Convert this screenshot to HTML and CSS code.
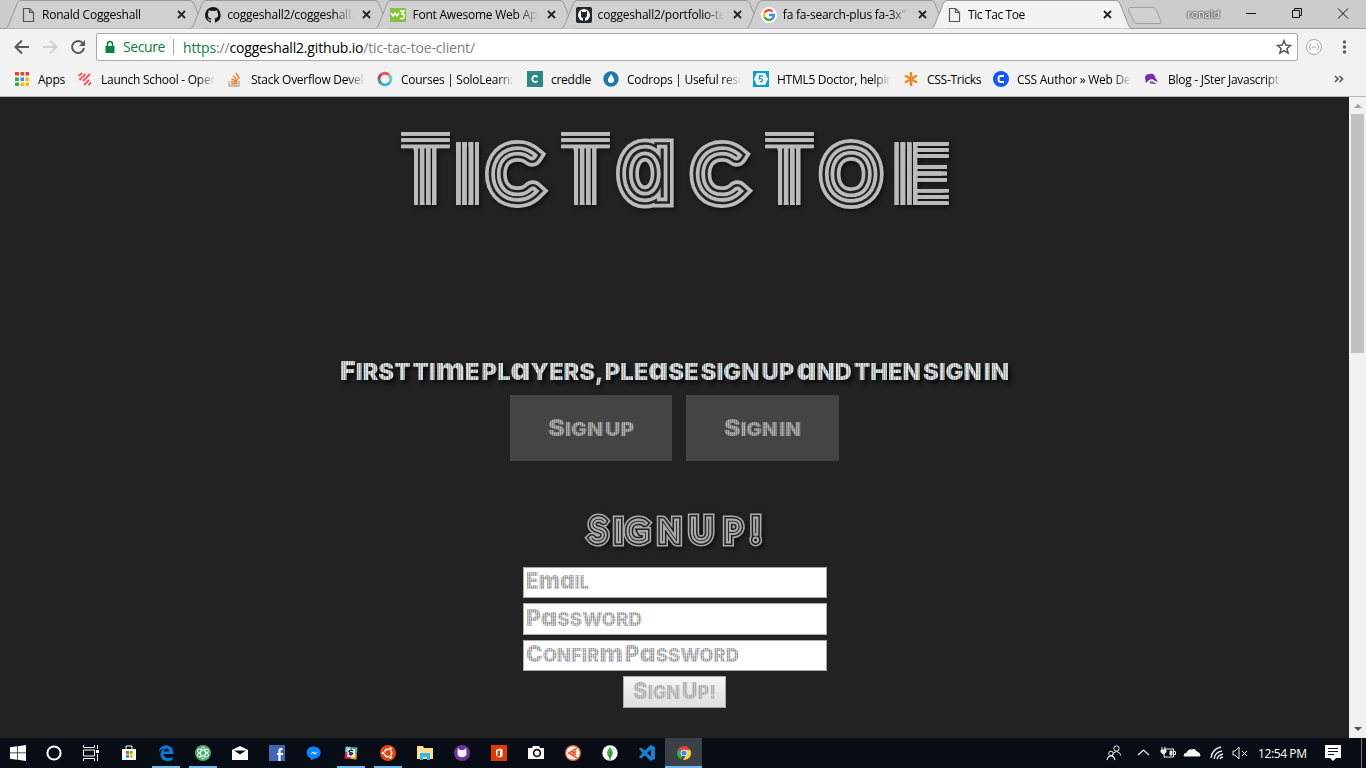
FILE: index.html
```html
<!DOCTYPE html>
<html lang="en">
<head>
<meta charset="utf-8">
<title>Tic Tac Toe</title>
<link rel="stylesheet" href="styles.css">
</head>
<body>
<svg class="sprites" width="0" height="0">
  <defs>
    <g id="doc" fill="none" stroke="#555" stroke-width="1.2"><path d="M3.5 1.5h6l4 4v9h-10zM9.500 1.500v4h4"/></g>
    <path id="x" d="M1 1l7 7M8 1L1 8" stroke="#222" stroke-width="1.8" fill="none"/>
    <path id="shape" d="M0 28.500C2 27 3 24 5 19L11 4Q12 .5 15 .5H184Q187 .5 188 4L194 19C196 24 197 27 199 28.500" stroke="#999"/>
    <path id="octo" d="M8 0a8 8 0 0 0-2.500 15.600c.4.100.5-.2.5-.4v-1.500c-2.200.5-2.700-1-2.700-1-.4-.9-.9-1.200-.9-1.200-.7-.5.1-.5.1-.5.800.1 1.200.8 1.200.8.700 1.200 1.900.9 2.300.7.100-.5.300-.9.500-1.100-1.800-.2-3.600-.9-3.600-4 0-.9.300-1.600.8-2.100-.1-.2-.4-1 .1-2.100 0 0 .7-.2 2.200.8a7.600 7.600 0 0 1 4 0c1.500-1 2.200-.8 2.200-.8.400 1.100.2 1.900.1 2.100.5.6.8 1.300.8 2.100 0 3.100-1.900 3.700-3.700 3.900.3.300.6.800.6 1.500v2.200c0 .2.100.5.6.4A8 8 0 0 0 8 0z"/>
    <pattern id="light" width="5" height="4" patternUnits="userSpaceOnUse"><rect width="5" height="4" fill="#e0e0e0"/><rect x="0" width="1" height="4" fill="#7fb4d0"/><rect x="3" width="1" height="4" fill="#b8a288"/><rect y="3" width="5" height="1" fill="#aaa" opacity=".35"/></pattern>
    <pattern id="mid" width="4" height="3" patternUnits="userSpaceOnUse"><rect width="4" height="3" fill="#b2b2b2"/><rect width="1" height="3" fill="#72899a"/><rect x="2" width="1" height="3" fill="#8f8078"/><rect y="2" width="4" height="1" fill="#777" opacity=".3"/></pattern>
    <pattern id="pale" width="4" height="3" patternUnits="userSpaceOnUse"><rect width="4" height="3" fill="#9c9c9c"/><rect width="1" height="3" fill="#bdd0e0"/><rect x="2" width="1" height="3" fill="#d3c2b8"/><rect y="2" width="4" height="1" fill="#fff" opacity=".25"/></pattern>
    <pattern id="paler" width="4" height="3" patternUnits="userSpaceOnUse"><rect width="4" height="3" fill="#adadad"/><rect width="1" height="3" fill="#c0cbd6"/><rect x="2" width="1" height="3" fill="#cfc6c2"/></pattern>
    <pattern id="col" width="6.3" height="96" patternUnits="userSpaceOnUse"><rect width="3.9" height="96" fill="#bbb"/></pattern>
    <pattern id="row" width="60" height="6.400" patternUnits="userSpaceOnUse"><rect width="60" height="3.500" fill="#bbb"/></pattern>
    <pattern id="colT" href="#col" x="18.600"/>
    <pattern id="colT2" href="#col" x="178.600"/>
    <pattern id="colT3" href="#col" x="382.600"/>
    <pattern id="colI" href="#col" x="61.200"/>
    <pattern id="colE" href="#col" x="499.500"/>
    <pattern id="rowT" href="#row" y="10"/>
    <pattern id="bars" width="800" height="200" patternUnits="userSpaceOnUse" x="-40" y="-40" viewBox="-40 -40 800 200">
      <rect x="6.500" y="10" width="48" height="16.300" fill="url(#rowT)"/><rect x="18.600" y="26" width="22.800" height="57" fill="url(#colT)"/>
      <rect x="166.500" y="10" width="48" height="16.300" fill="url(#rowT)"/><rect x="178.600" y="26" width="22.800" height="57" fill="url(#colT2)"/>
      <rect x="370.500" y="10" width="48" height="16.300" fill="url(#rowT)"/><rect x="382.600" y="26" width="22.800" height="57" fill="url(#colT3)"/>
      <rect x="61.200" y="20" width="22.800" height="63" fill="url(#colI)"/>
      <rect x="499.500" y="20" width="22.800" height="63" fill="url(#colE)"/>
      <path d="M521 21.700h32.500M521 27.900h32.500M521 34.200h32.500M521 45h31M521 51.500h31M521 57.700h31M521 68.600h32.500M521 75h32.500M521 81.300h32.500" stroke="#bbb" stroke-width="3.400"/>
    </pattern>
  </defs>
</svg>

<header class="browser">
  <div class="tabs">
    <div class="tab"><svg class="edge" width="199" height="29"><use href="#shape" fill="#d0d0d0"/></svg><svg class="ico" viewBox="0 0 16 16"><use href="#doc"/></svg><span>Ronald Coggeshall</span><svg class="close" viewBox="0 0 9 9"><use href="#x"/></svg></div>
    <div class="tab"><svg class="edge" width="199" height="29"><use href="#shape" fill="#d0d0d0"/></svg><svg class="ico" viewBox="0 0 16 16"><use href="#octo" fill="#191717"/></svg><span>coggeshall2/coggeshall2</span><svg class="close" viewBox="0 0 9 9"><use href="#x"/></svg></div>
    <div class="tab"><svg class="edge" width="199" height="29"><use href="#shape" fill="#d0d0d0"/></svg><svg class="ico" viewBox="0 0 16 16"><rect y="1" width="16" height="14" fill="#83c340"/><path d="M1 6l2 3 2-3 2 3 2-3M10 4h4l-2 3q3 0 2 3t-4 1" fill="none" stroke="#fff" stroke-width="1.400"/></svg><span>Font Awesome Web Application</span><svg class="close" viewBox="0 0 9 9"><use href="#x"/></svg></div>
    <div class="tab"><svg class="edge" width="199" height="29"><use href="#shape" fill="#d0d0d0"/></svg><svg class="ico" viewBox="0 0 16 16"><rect width="16" height="16" rx="2" fill="#24292e"/><circle cx="8" cy="8" r="6" fill="#fff"/><path d="M5 4l2 1h2l2-1v5q-1 2-2 2v3H7v-3q-2 0-2-2z" fill="#24292e"/></svg><span>coggeshall2/portfolio-template</span><svg class="close" viewBox="0 0 9 9"><use href="#x"/></svg></div>
    <div class="tab"><svg class="edge" width="199" height="29"><use href="#shape" fill="#d0d0d0"/></svg><svg class="ico" viewBox="0 0 16 16"><circle cx="8" cy="8" r="8" fill="#fff"/><g fill="none" stroke-width="2.300"><path d="M11.500 4.500A5 5 0 0 0 3.600 5.800" stroke="#ea4335"/><path d="M3.600 5.800a5 5 0 0 0 0 4.500" stroke="#fbbc05"/><path d="M3.600 10.200a5 5 0 0 0 7.700 1.500" stroke="#34a853"/><path d="M11.300 11.700A5 5 0 0 0 13 8H8" stroke="#4285f4"/></g></svg><span>fa fa-search-plus fa-3x" - Google</span><svg class="close" viewBox="0 0 9 9"><use href="#x"/></svg></div>
    <div class="tab active"><svg class="edge" width="199" height="29"><use href="#shape" fill="#f2f2f2"/></svg><svg class="ico" viewBox="0 0 16 16"><use href="#doc"/></svg><span>Tic Tac Toe</span><svg class="close" viewBox="0 0 9 9"><use href="#x"/></svg></div>
    <svg class="newtab" width="36" height="18"><path d="M3 .5h23q2 0 3 2l5 12q1 2-1 2H10q-2 0-3-2L1.500 3Q1 .5 3 .5z" fill="#d0d0d0" stroke="#a0a0a0"/></svg>
    <span class="user">ronald</span>
    <svg class="winctl" width="116" height="28" fill="none" stroke="#111"><path d="M9 13.500h10M55.500 10.500h7v7h-7zM57.500 10V8.500h7v7H63M101 8.500l10 10M111 8.500l-10 10"/></svg>
  </div>
  <div class="toolbar">
    <svg class="nav" width="96" height="36" fill="none" stroke-width="2"><path d="M29 18H16M22 11.500L15.500 18l6.500 6.500" stroke="#555a5e"/><path d="M43 18h13M50 11.500l6.500 6.500-6.500 6.500" stroke="#d0d0d0"/><path d="M83 14.500A6 6 0 1 0 84 19" stroke="#555a5e"/><path d="M85 11v6h-6z" fill="#555a5e"/></svg>
    <div class="omni">
      <svg width="10" height="13" viewBox="0 0 10 13"><path d="M.5 5h9v7h-9z" fill="#0b8043"/><path d="M2.500 6V3a2.500 2.500 0 0 1 5 0v3" fill="none" stroke="#0b8043" stroke-width="1.500"/></svg>
      <span class="secure">Secure</span>
      <span class="url"><b>https</b>://<i>coggeshall2.github.io</i>/tic-tac-toe-client/</span>
      <svg class="star" width="16" height="16" viewBox="0 0 16 16"><path d="M8 1.800l1.800 4.300 4.700.4-3.600 3 1.200 4.600L8 11.600l-4.100 2.500 1.200-4.600-3.600-3 4.700-.4z" fill="none" stroke="#555" stroke-width="1.500"/></svg>
    </div>
    <svg class="ext" width="68" height="36"><circle cx="16" cy="18" r="7.500" fill="#fafafa" stroke="#aaa"/><path d="M13 15q-1.500 0-1 2l-1 1 1 1q-.5 2 1 2M19 15q1.500 0 1 2l1 1-1 1q.5 2-1 2M14 18h4" fill="none" stroke="#aaa"/><g fill="#5a5a5a"><circle cx="46.500" cy="13" r="1.700"/><circle cx="46.500" cy="18" r="1.700"/><circle cx="46.500" cy="23" r="1.700"/></g></svg>
  </div>
  <nav class="marks">
    <a class="w63"><svg viewBox="0 0 16 16"><path d="M1 1h4v3.500H1z" fill="#ea4335"/><path d="M6.500 1H10v3.500H6.500zM11.500 1H15v3.500h-3.500z" fill="#ea4335"/><path d="M1 6.500h4V10H1zM1 11.500h4V15H1z" fill="#34a853"/><path d="M6.500 6.500H10V10H6.500z" fill="#4285f4"/><path d="M11.500 6.500H15V10h-3.500zM6.500 11.500H10V15H6.500zM11.500 11.500H15V15h-3.500z" fill="#fbbc05"/></svg><span>Apps</span></a>
    <a><svg viewBox="0 0 16 16"><path d="M1.500 5l3.500-3M2.500 9l6-6M6 10l7-7M7 14l5-5M11.500 14l2.500-2.500" stroke="#ee5a5e" stroke-width="2" fill="none"/></svg><span>Launch School - Open</span></a>
    <a class="w149"><svg viewBox="0 0 16 16" fill="none"><path d="M2 10v5h10v-5" stroke="#aaa" stroke-width="1.300"/><path d="M4 12.800h6.500M4 10.500l6.500.7M4.500 8l6 2M6 5l5 3.700M9 2l3.500 5.500" stroke="#f48024" stroke-width="1.400"/></svg><span>Stack Overflow Developer</span></a>
    <a><svg viewBox="0 0 16 16" fill="none" stroke-width="3"><path d="M2 8a6 6 0 0 1 3-5" stroke="#b64a6b"/><path d="M5 3a6 6 0 0 1 7 1" stroke="#ee5555"/><path d="M12 4a6 6 0 0 1 1 7" stroke="#6fcbb3"/><path d="M13 11a6 6 0 0 1-8 2" stroke="#38b6dc"/><path d="M5 13a6 6 0 0 1-3-5" stroke="#559b81"/></svg><span>Courses | SoloLearn: Learn</span></a>
    <a class="w76"><svg viewBox="0 0 16 16"><path d="M0 0h16v16H0z" fill="#2f8886"/><path d="M10.500 6a3 3 0 1 0 0 4" fill="none" stroke="#fff" stroke-width="1.800"/></svg><span>creddle</span></a>
    <a><svg viewBox="0 0 16 16"><circle cx="8" cy="8" r="7.700" fill="#2278a8"/><path d="M8 3q3 4 3 6a3 3 0 0 1-6 0q0-2 3-6z" fill="#fff"/></svg><span>Codrops | Useful resources</span></a>
    <a><svg viewBox="0 0 16 16"><path d="M0 0h16v16H0z" fill="#0a9cdc"/><path d="M4 2h8l3 6-3 6H4L1 8z" fill="#fff"/><path d="M10 5H6.500v3q3-1 3 1t-3 1.500" fill="none" stroke="#0a9cdc" stroke-width="1.300"/></svg><span>HTML5 Doctor, helping</span></a>
    <a class="w90"><svg viewBox="0 0 16 16"><path d="M8 1v14M2 4.500l12 7M14 4.500l-12 7" stroke="#e58a26" stroke-width="2.600"/></svg><span>CSS-Tricks</span></a>
    <a class="w151"><svg viewBox="0 0 16 16"><circle cx="8" cy="8" r="8" fill="#1455fa"/><path d="M11 5H7.500q-2 0-2 3t2 3H11" fill="none" stroke="#fff" stroke-width="2"/></svg><span>CSS Author » Web Design</span></a>
    <a class="last"><svg viewBox="0 0 16 16"><path d="M1 7q0-4 5-4 4-1 5 3l3 5-3-1-3-2-3 1-3 3z" fill="#7b2ab1"/><path d="M8 10l5 3H7l-2-2z" fill="#777"/></svg><span>Blog - JSter Javascript</span></a>
    <svg class="more" viewBox="0 0 16 16"><path d="M4 5l3 3-3 3M8.500 5l3 3-3 3" fill="none" stroke="#555" stroke-width="1.600"/></svg>
  </nav>
</header>

<div class="viewport">
  <main>
    <h1>
      <svg class="logo" width="560" height="96">
        <defs><text id="ttt" y="83"><tspan class="t" x="-3" y="83">T</tspan><tspan class="i" x="59.500" y="83">i</tspan><tspan class="c" x="96" y="75">c</tspan> <tspan class="t" x="157" y="83">T</tspan><tspan class="a" x="226" y="75">a</tspan><tspan class="c" x="300.500" y="75">c</tspan> <tspan class="t" x="361" y="83">T</tspan><tspan class="o" x="429.500" y="75.500">o</tspan><tspan class="e" x="500" y="83">e</tspan></text></defs>
        <use href="#ttt" stroke="#bbb" stroke-width="21"/><use href="#ttt" stroke="#222" stroke-width="13.700"/><use href="#ttt" stroke="#bbb" stroke-width="8.500"/><use href="#ttt" fill="#222" stroke="#222" stroke-width="1"/>
      </svg>
    </h1>
    <h3><svg class="deco" width="680" height="36"><text x="5" y="26" textLength="669" lengthAdjust="spacingAndGlyphs" fill="url(#light)"><tspan class="cap">F</tspan>irst ti<tspan class="rd">m</tspan>e pl<tspan class="rd">a</tspan>yers, ple<tspan class="rd">a</tspan>se sign up <tspan class="rd">a</tspan>nd then sign in</text></svg></h3>
    <div class="actions">
      <button class="up"><svg class="deco small" width="88" height="30"><text x="1" y="22" textLength="86" lengthAdjust="spacingAndGlyphs" fill="url(#mid)"><tspan class="cap">S</tspan>ign up</text></svg></button>
      <button class="in"><svg class="deco small" width="80" height="30"><text x="1" y="22" textLength="77" lengthAdjust="spacingAndGlyphs" fill="url(#mid)"><tspan class="cap">S</tspan>ign in</text></svg></button>
    </div>
    <h2>
      <svg class="sub" width="190" height="48">
        <defs><text id="su" y="33.500"><tspan class="s" x="10">S</tspan><tspan class="n" x="35">i</tspan><tspan class="n" x="47">g</tspan><tspan class="n" x="79">n</tspan> <tspan class="s" x="110">U</tspan><tspan class="n" x="145">p</tspan><tspan class="s" x="172">!</tspan></text></defs>
        <use href="#su" stroke="#aaa" stroke-width="11"/><use href="#su" stroke="#222" stroke-width="7.800"/><use href="#su" stroke="#aaa" stroke-width="4.800"/><use href="#su" fill="#222" stroke="#222" stroke-width=".5"/>
      </svg>
    </h2>
    <form>
      <div class="field"><svg class="deco small" width="290" height="27"><text x="2" y="20.500" textLength="63" lengthAdjust="spacingAndGlyphs" fill="url(#pale)"><tspan class="cap">E</tspan><tspan class="rd">ma</tspan>il</text></svg></div>
      <div class="field tall"><svg class="deco small" width="290" height="27"><text x="2" y="21.500" textLength="116" lengthAdjust="spacingAndGlyphs" fill="url(#pale)"><tspan class="cap">P</tspan><tspan class="rd">a</tspan>ssword</text></svg></div>
      <div class="field"><svg class="deco small" width="290" height="27"><text x="2" y="20.500" textLength="213" lengthAdjust="spacingAndGlyphs" fill="url(#pale)"><tspan class="cap">C</tspan>onfir<tspan class="rd">m</tspan> <tspan class="cap">P</tspan><tspan class="rd">a</tspan>ssword</text></svg></div>
      <button class="submit" type="button"><svg class="deco small" width="86" height="28"><text x="1" y="21" textLength="83" lengthAdjust="spacingAndGlyphs" fill="url(#paler)"><tspan class="cap">S</tspan>ign <tspan class="cap">U</tspan>p!</text></svg></button>
    </form>
  </main>
  <div class="scroll"><i class="arrow top"></i><i class="thumb"></i><i class="arrow"></i></div>
</div>

<footer class="taskbar">
  <div class="slots">
    <a><svg viewBox="0 0 16 16"><path d="M0 2.300l7-1v6.300H0zM7.700 1.200L16 0v7.600H7.700zM0 8.300h7v6.400l-7-1zM7.700 8.300H16V16l-8.300-1.200z" fill="#fff"/></svg></a>
    <a><svg viewBox="0 0 16 16"><circle cx="8" cy="8" r="6.600" fill="none" stroke="#fff" stroke-width="2"/></svg></a>
    <a><svg viewBox="0 0 16 16"><path d="M.5 0v2.500h11V0M.5 5h11v6H.5zM.5 16v-2.500h11V16M14.500 0v4M14.500 9v7" fill="none" stroke="#fff"/><path d="M13 5h3v3h-3z" fill="#fff"/></svg></a>
    <a><svg viewBox="0 0 16 16"><path d="M1 4h14v11H1z" fill="#fff"/><path d="M5 4V1h6v3" fill="none" stroke="#fff"/><path d="M5 6h3v3H5z" fill="#f25022"/><path d="M8.700 6h3v3h-3z" fill="#7fba00"/><path d="M5 9.700h3v3H5z" fill="#00a4ef"/><path d="M8.700 9.700h3v3h-3z" fill="#ffb900"/></svg></a>
    <a class="on"><svg viewBox="0 0 16 16"><path d="M.5 7Q2 .2 8.500.2 15.500.5 15.500 9H5.500q.5 4 4.500 4 2.500 0 4.500-1.200V15q-2 1-5.500 1-6.500-.5-6.500-6.500 0-4 3.500-6Q2.500 4 .5 7zM5.600 6.500h5.400q-.2-3-2.700-3-2.300.200-2.700 3z" fill="#0a78d6"/></svg></a>
    <a class="on"><svg viewBox="0 0 16 16"><circle cx="8" cy="8" r="8" fill="#4cab70"/><g fill="none" stroke="#e8f6eb"><ellipse cx="8" cy="8" rx="2.500" ry="6"/><ellipse cx="8" cy="8" rx="2.500" ry="6" transform="rotate(60 8 8)"/><ellipse cx="8" cy="8" rx="2.500" ry="6" transform="rotate(120 8 8)"/></g></svg></a>
    <a><svg viewBox="0 0 16 16"><path d="M0 5l8-4 8 4v10H0z" fill="#fff"/><path d="M2 5.500h12L8 9.500z" fill="#0a0e15"/></svg></a>
    <a><svg viewBox="0 0 16 16"><path d="M0 0h16v16H0z" fill="#4267b2"/><path d="M13.500 4h-1.500q-1.500 0-1.500 2v10M8 9h6" fill="none" stroke="#fff" stroke-width="2.200"/></svg></a>
    <a><svg viewBox="0 0 16 16"><path d="M8 1.500a6.500 6 0 0 1 0 12.300l-3 1.700v-2A6.500 6.200 0 0 1 8 1.500z" fill="#0a84ff"/><path d="M4 9.500l3-3 2 1.600 3-1.600-3 3-2-1.600z" fill="#fff"/></svg></a>
    <a class="on"><svg viewBox="0 0 16 16"><g transform="rotate(5 8 8)"><path d="M2 2h6v6H2z" fill="#70cadb"/><path d="M8 2h6v6H8z" fill="#3eb991"/><path d="M2 8h6v6H2z" fill="#d82062"/><path d="M8 8h6v6H8z" fill="#e9a820"/><path d="M4.500 4h7.500v8H4.500z" fill="#fff"/></g><path d="M10 6q-3-2-4 .5 1 1.500 3.500 1.800-.5 2.500-3.500.7" fill="none" stroke="#222" stroke-width="1.500"/></svg></a>
    <a class="on"><svg viewBox="0 0 16 16"><circle cx="8" cy="8" r="8" fill="#dd4814"/><circle cx="8" cy="8" r="3.700" fill="none" stroke="#fff" stroke-width="1.600"/><g fill="#fff" stroke="#dd4814" stroke-width=".7"><circle cx="3" cy="8" r="1.700"/><circle cx="10.500" cy="3.700" r="1.700"/><circle cx="10.500" cy="12.300" r="1.700"/></g></svg></a>
    <a><svg viewBox="0 0 16 16"><path d="M0 1h6l1 2h9v11H0z" fill="#ffe08a"/><path d="M3 15V8h10v7h-3v-3H6v3z" fill="#36b7ea"/></svg></a>
    <a><svg viewBox="0 0 16 16"><circle cx="8" cy="8" r="8" fill="#6a3498"/><path d="M4 3l2 2h4l2-2q1.500 7-1 8.500-3 1.500-6 0Q2.500 10 4 3z" fill="#f4eef7"/></svg></a>
    <a><svg viewBox="0 0 16 16"><path d="M0 0h16v16H0z" fill="#dc3b0a"/><path d="M5 11V5l4-1.500 2.500 1v7L9 12.500zl4 .3V5L6.500 6v4z" fill="#fff" fill-rule="evenodd"/></svg></a>
    <a><svg viewBox="0 0 16 16"><path d="M0 3h4l1-2h6l1 2h4v11H0z" fill="#fff"/><circle cx="9" cy="8" r="3.400" fill="#fff" stroke="#111" stroke-width="1.700"/></svg></a>
    <a><svg viewBox="0 0 16 16"><circle cx="8" cy="8" r="7.300" fill="#fff" stroke="#ed6b3c" stroke-width="1.400"/><path d="M12 3L4 8l8 5M7 6l4 4M7 10l4-4" fill="none" stroke="#e85c2b" stroke-width="1.800"/></svg></a>
    <a><svg viewBox="0 0 16 16"><circle cx="8" cy="8" r="7.700" fill="#fff"/><path d="M8 2q6 6 0 11.500Q2 8 8 2z" fill="#4caf50"/><path d="M8 6v9" stroke="#247b35"/></svg></a>
    <a><svg viewBox="0 0 16 16"><path d="M11.500 0L16 2v12l-4.500 2L6 10.500 2 13.500 0 12l3.500-4L0 4l2-1.500 4 3zm.5 4.500L8 8l4 3.500z" fill="#1580d4"/></svg></a>
    <a class="on current"><svg viewBox="0 0 16 16"><path d="M8 8L2 4.600A7 7 0 0 1 14.300 5H8z" fill="#ea4335"/><path d="M8 8l-2.800 6.400A7 7 0 0 1 2 4.500z" fill="#34a853"/><path d="M8 5h6.300A7 7 0 0 1 7 15l3.500-6z" fill="#fdd13a"/><circle cx="8" cy="8" r="3.300" fill="#fff"/><circle cx="8" cy="8" r="2.600" fill="#4285f4"/></svg></a>
  </div>
  <div class="tray">
    <svg width="152" height="30" fill="none" stroke="#eee"><circle cx="12.500" cy="10.500" r="2.700"/><path d="M8 18q1-4 4.500-4.500 3.500.5 4.500 4"/><circle cx="7" cy="15.500" r="2.300"/><path d="M3 22q1-4 4-4t4 4M34 17l5.500-5 5.500 5" stroke-width="1.200"/><path d="M60 11h9.500v8H60v-4M69.500 13.500h2v3h-2"/><path d="M66 13h2v4h-2zM57 12h5v2q-2.500 4-5 0zM58 9v3M61 9v3" fill="#eee"/><path d="M80 18q0-3 3-3 1-4 5-3 3-2 5 2 3 .5 3 4z" fill="#fff"/><path d="M107 20q1-9 10-11M110 21q1-7 8-8M113 21q1-4 6-5M116 21q1-2 3-2" stroke-width="1.300"/><path d="M129 13h2l4-4v12l-4-4h-2zM138 13l5 5M143 13l-5 5"/></svg>
    <span class="clock">12:54 PM</span>
    <svg class="note" width="18" height="16"><path d="M0 0h16v13h-5l-3 3-3-3H0z" fill="#fff"/><path d="M3 3.500h10M3 6.500h10M3 9.500h6" stroke="#10151d"/></svg>
    <i class="desk"></i>
  </div>
</footer>
</body>
</html>
```
FILE: styles.css
```css
* { box-sizing: border-box; }
body { margin: 0; width: 1366px; height: 768px; overflow: hidden; display: flex; flex-direction: column; font: 12px "Open Sans", "Noto Sans", sans-serif; color: #000; }
svg { display: block; flex: none; overflow: visible; }
.sprites { position: absolute; }
.browser { height: 97px; background: #f2f2f2; border-bottom: 1px solid #b5b5b5; }
.tabs { height: 29px; background: #ccc; border-bottom: 1px solid #999; display: flex; padding-left: 6px; }
.tab { position: relative; width: 199px; height: 29px; margin-right: -13.8px; flex: none; display: flex; align-items: center; padding-left: 14px; }
.tab.active { z-index: 2; margin-right: -4px; }
.edge { position: absolute; left: 0; top: 0; }
.tab .ico, .tab span, .tab .close { position: relative; }
.ico { width: 16px; height: 16px; margin-right: 6px; }
.tab span { width: 126px; margin-right: 9px; letter-spacing: -.22px; }
.tab.active span { letter-spacing: -.4px; }
.tab span, .marks span { white-space: nowrap; overflow: hidden; -webkit-mask-image: linear-gradient(90deg, #000 85%, transparent); mask-image: linear-gradient(90deg, #000 85%, transparent); }
.close { width: 9px; height: 9px; }
.newtab { margin-top: 7px; }
.user { margin: 6px 0 0 24px; width: 34px; font-size: 11px; line-height: 15px; letter-spacing: -.1px; color: #fff; text-shadow: 0 0 1px #333, 0 0 2px #333, 0 0 2px #444; }
.winctl { margin-left: 16px; }
.toolbar { height: 36px; display: flex; align-items: center; }
.omni { width: 1202px; height: 28px; background: #fff; border: 1px solid #a8a8a8; border-radius: 2px; display: flex; align-items: center; padding: 0 5px 0 8px; font-size: 14px; color: #808080; }
.secure { color: #0b8043; margin-left: 8px; padding-right: 9px; border-right: 1px solid #aaa; line-height: 16px; letter-spacing: -.4px; width: 51px; }
.url { margin-left: 9px; letter-spacing: -.17px; }
.url b { font-weight: 400; color: #0b8043; }
.url i { font-style: normal; color: #000; }
.star { margin-left: auto; }
.marks { display: flex; align-items: center; height: 28px; padding-left: 14px; }
.marks a { display: flex; align-items: center; gap: 8px; width: 150px; flex: none; }
.marks a svg, .more { width: 16px; height: 16px; }
.marks span { width: 114px; letter-spacing: -.27px; }
.marks .w63 { width: 63px; } .marks .w76 { width: 76px; } .marks .w90 { width: 90px; } .marks .w149 { width: 150px; } .marks .w151 { width: 151px; }
.w63 span, .w76 span, .w90 span { width: auto; -webkit-mask-image: none; mask-image: none; overflow: visible; }
.more { margin-left: 37px; }
.viewport { height: 641px; display: flex; background: #222; }
main { width: 1349px; padding-top: 25px; display: flex; flex-direction: column; align-items: center; }
h1, h2, h3 { margin: 0; }
text { text-transform: uppercase; }
.logo, .sub { filter: drop-shadow(2px 2px 2px #111); }
h3 svg { filter: drop-shadow(3px 3px 2px #0a0a0a); }
.logo text, .sub text { font-family: Lato, sans-serif; font-weight: 100; stroke-linejoin: miter; stroke-miterlimit: 2; }
.t, .i, .e { font-family: Inter, sans-serif; font-weight: 900; fill: url(#bars); stroke: url(#bars); stroke-width: 3px; }
.t { font-size: 100px; stroke-width: 5px; } .i, .e { font-size: 85px; }
.i { stroke-width: 7px; } .e { stroke-width: 13px; }
.c { font-size: 66px; } .o { font-size: 68px; }
.a, .rd { text-transform: none; font-feature-settings: "cv11"; }
.a { font-family: Inter, sans-serif; font-size: 87px; }
h3 { margin-top: 136px; }
.deco text { font: 900 23px Inter, "Open Sans", sans-serif; word-spacing: -2.5px; }
.deco .cap { font-size: 26px; }
.deco .rd { font-size: 30px; }
.deco.small text { font-size: 19px; word-spacing: -2px; }
.deco.small .cap { font-size: 23px; }
.deco.small .rd { font-size: 26px; }
.actions { display: flex; gap: 14px; margin-top: 5px; }
.actions button { height: 66px; border: 0; background: #444; padding: 2px 0 0; display: flex; align-items: center; justify-content: center; }
.up { width: 162px; } .in { width: 153px; }
h2 { margin-top: 46px; }
.s { font-size: 31px; } .n { font-size: 28px; }
form { margin-top: 12px; width: 304px; display: flex; flex-direction: column; align-items: center; gap: 5px; }
.field { width: 304px; height: 31px; background: #fff; border: 1px solid #aaa; }
.field.tall { height: 32px; }
.submit { width: 103px; height: 32px; padding: 0 0 0 8px; border: 1px solid #aaa; background: linear-gradient(#f6f6f6, #dedede); }
.scroll { width: 17px; background: #f1f1f1; display: flex; flex-direction: column; align-items: center; padding: 7px 0; }
.arrow { border: 4px solid transparent; border-top: 4px solid #505050; border-bottom: 0; margin-top: auto; }
.arrow.top { border-top: 0; border-bottom: 4px solid #a3a3a3; margin: 0; }
.thumb { width: 13px; height: 239px; margin-top: 6px; background: #c1c1c1; }
.taskbar { height: 30px; background: #080c14; display: flex; justify-content: space-between; color: #fff; }
.slots { display: flex; }
.slots a { width: 37px; height: 30px; display: flex; align-items: center; justify-content: center; position: relative; }
.slots a:nth-child(-n+2) { width: 36px; }
.slots a:nth-child(4) { margin-left: 1px; }
.slots svg { width: 16px; height: 16px; }
.on::after { content: ""; position: absolute; left: 5px; right: 4px; bottom: 0; height: 2px; background: #76b9ed; }
.current { background: #3b4047; }
.current::after { left: 0; right: 0; }
.tray { display: flex; align-items: center; width: 262px; }
.clock { width: 50px; margin-left: 2px; letter-spacing: -.4px; white-space: nowrap; }
.note { margin-left: 17px; }
.desk { width: 1px; height: 30px; background: #777; margin-left: 18px; }
```
